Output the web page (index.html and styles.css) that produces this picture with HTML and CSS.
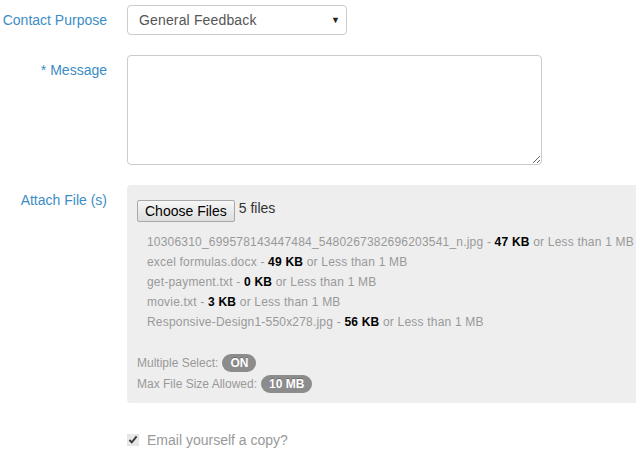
FILE: index.html
```html
<!DOCTYPE html>
<html>
<head>
<meta charset="utf-8">
<link rel="stylesheet" href="styles.css">
</head>
<body>
<form class="form">
  <div class="row">
    <label class="label">Contact Purpose</label>
    <div class="field">
      <div class="select">
        <span>General Feedback</span>
        <span class="caret">▼</span>
      </div>
    </div>
  </div>
  <div class="row">
    <label class="label">* Message</label>
    <div class="field">
      <textarea class="textarea"></textarea>
    </div>
  </div>
  <div class="row">
    <label class="label">Attach File (s)</label>
    <div class="field">
      <div class="panel">
        <div class="chooser">
          <button type="button" class="choose">Choose Files</button>
          <span class="count">5 files</span>
        </div>
        <ul class="files">
          <li>10306310_699578143447484_5480267382696203541_n.jpg - <b>47 KB</b> or Less than 1 MB</li>
          <li>excel formulas.docx - <b>49 KB</b> or Less than 1 MB</li>
          <li>get-payment.txt - <b>0 KB</b> or Less than 1 MB</li>
          <li>movie.txt - <b>3 KB</b> or Less than 1 MB</li>
          <li>Responsive-Design1-550x278.jpg - <b>56 KB</b> or Less than 1 MB</li>
        </ul>
        <div class="meta">Multiple Select: <span class="badge">ON</span></div>
        <div class="meta">Max File Size Allowed: <span class="badge">10 MB</span></div>
      </div>
    </div>
  </div>
  <div class="row">
    <span></span>
    <div class="field">
      <label class="check"><input type="checkbox" checked> Email yourself a copy?</label>
    </div>
  </div>
</form>
</body>
</html>
```
FILE: styles.css
```css
html, body {
  margin: 0;
  padding: 0;
  overflow: hidden;
  background: #fff;
}
body {
  font-family: "Liberation Sans", Arial, sans-serif;
  font-size: 14px;
  color: #555;
}
.form {
  padding-top: 5px;
}
.row {
  display: grid;
  grid-template-columns: 107px 1fr;
  column-gap: 20px;
  margin-bottom: 20px;
}
.field {
  min-width: 0;
}
.label {
  text-align: right;
  color: #3d8cc6;
  font-size: 14px;
  line-height: 20px;
  padding-top: 5px;
}
.select {
  box-sizing: border-box;
  width: 220px;
  height: 30px;
  border: 1px solid #ccc;
  border-radius: 4px;
  display: flex;
  align-items: center;
  justify-content: space-between;
  padding: 0 6px 0 11px;
  color: #555;
  font-size: 14px;
  letter-spacing: 0.15px;
}
.caret {
  font-size: 9px;
  color: #222;
}
.textarea {
  display: block;
  box-sizing: border-box;
  width: 415px;
  height: 110px;
  border: 1px solid #ccc;
  border-radius: 4px;
  margin: 0;
  resize: both;
}
.panel {
  background: #eee;
  border-radius: 4px 0 0 4px;
  padding: 15px 0 9px 10px;
  min-height: 194px;
}
.chooser {
  display: flex;
  align-items: flex-start;
  gap: 4px;
}
.choose {
  font-family: "Liberation Sans", Arial, sans-serif;
  font-size: 14px;
  color: #000;
  background: linear-gradient(#f6f6f6, #dedede);
  border: 1px solid #a9a9a9;
  border-radius: 2px;
  height: 22px;
  padding: 0 7px;
  margin: 0;
}
.count {
  color: #333;
  font-size: 14px;
  line-height: 16px;
}
.files {
  list-style: none;
  margin: 10px 0 20px;
  padding: 0 0 0 10px;
  font-size: 12px;
  line-height: 20px;
  color: #999;
  white-space: nowrap;
  letter-spacing: 0.2px;
}
.files b {
  color: #000;
}
.meta {
  font-size: 12px;
  color: #999;
  height: 21px;
  display: flex;
  align-items: center;
  gap: 4px;
}
.badge {
  background: #8c8c8c;
  color: #fff;
  font-weight: bold;
  font-size: 12px;
  line-height: 18px;
  padding: 0 8px;
  border-radius: 9px;
  text-shadow: 0 -1px 0 rgba(0,0,0,.25);
}
.check {
  display: flex;
  align-items: center;
  gap: 8px;
  color: #999;
  font-size: 14px;
  line-height: 20px;
  padding-top: 7px;
}
.check input {
  margin: 0;
  width: 12px;
  height: 12px;
  accent-color: #e8e8e8;
}
```
